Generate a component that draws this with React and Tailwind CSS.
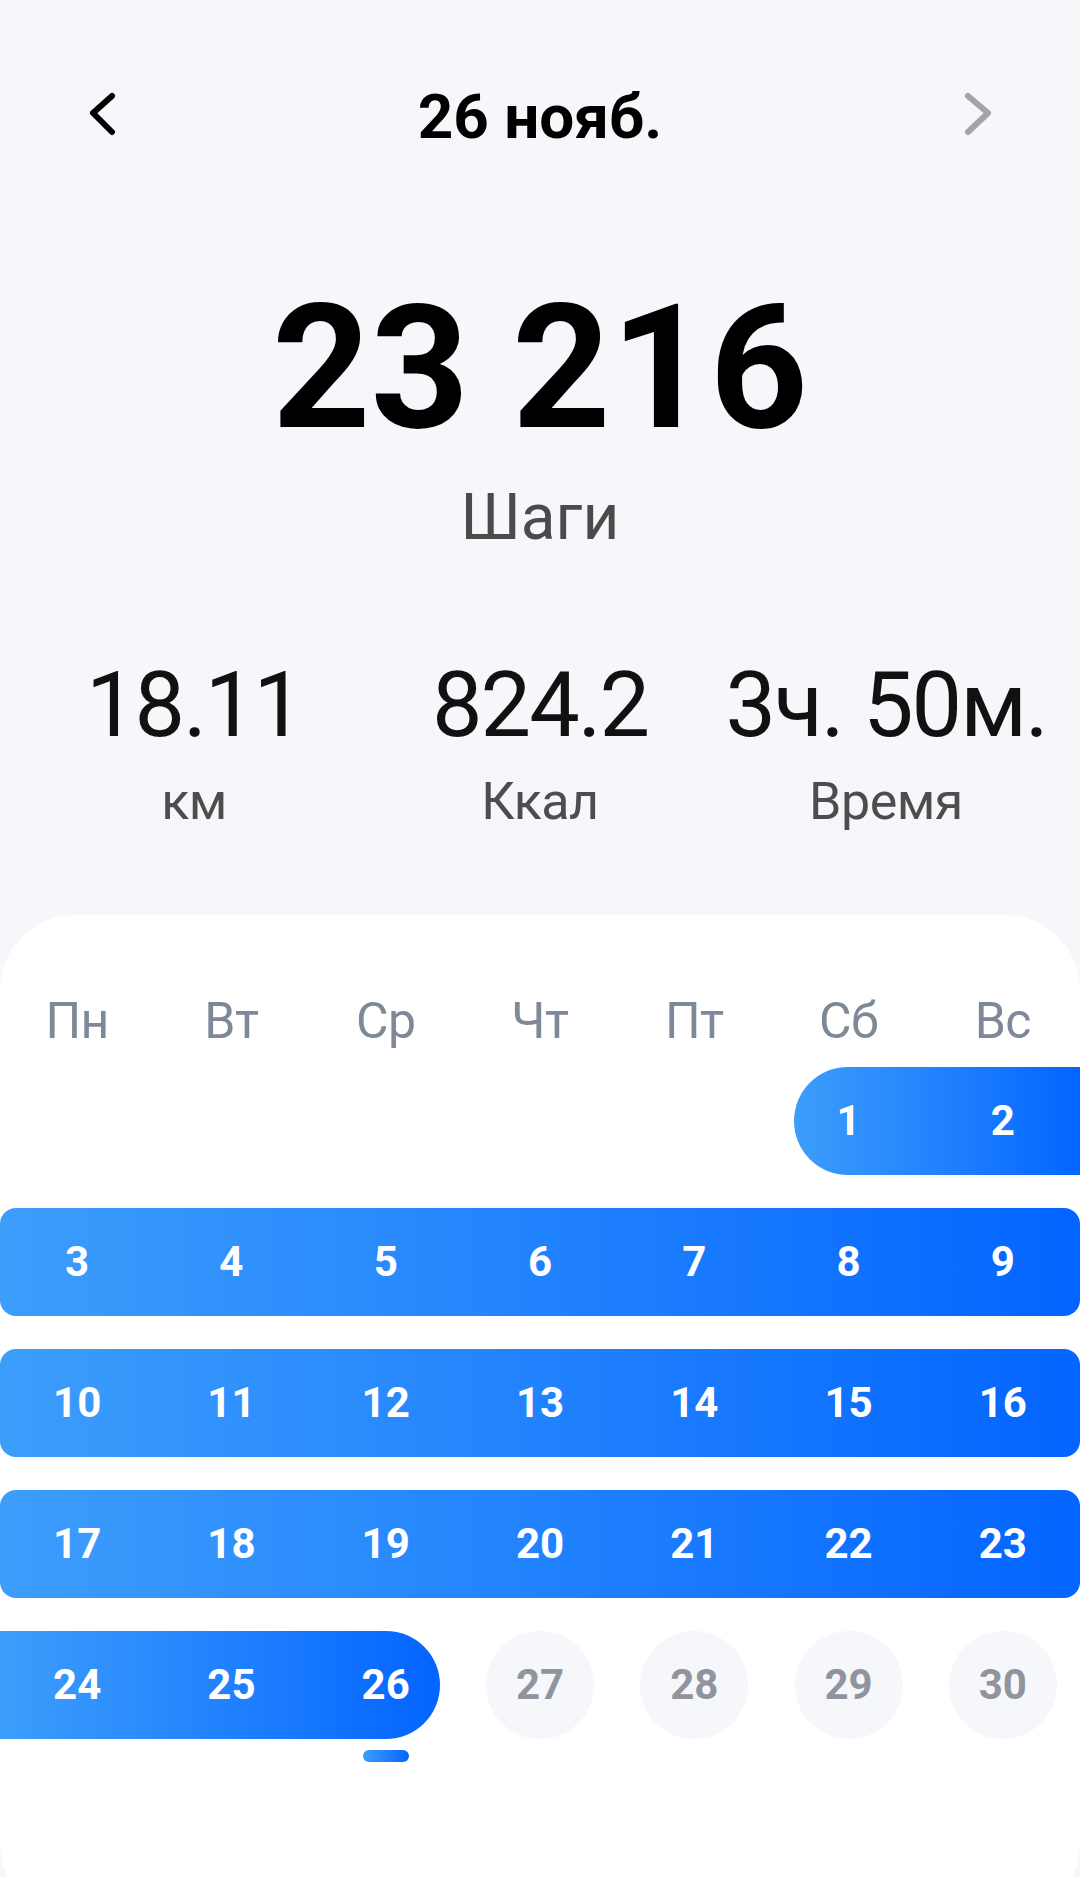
import React from 'react';

const grad = 'bg-gradient-to-r from-[#3d9dfb] to-[#0464ff]';

const weekDays = ['Пн', 'Вт', 'Ср', 'Чт', 'Пт', 'Сб', 'Вс'];

const Num = ({ children, className = '' }) => (
  <div className={`h-full flex items-center justify-center text-[42px] leading-none font-bold ${className}`}>
    {children}
  </div>
);

const FullRow = ({ days }) => (
  <div className={`h-[108px] rounded-[16px] ${grad} grid grid-cols-7 text-white`}>
    {days.map((d) => (
      <Num key={d}>{d}</Num>
    ))}
  </div>
);

const Stat = ({ value, label }) => (
  <div className="flex flex-col items-center">
    <div className="text-[90px] leading-none tracking-[-2px] text-[#111]">{value}</div>
    <div className="mt-[25px] text-[52px] leading-none tracking-[-0.5px] text-[#4d4d4d]">{label}</div>
  </div>
);

const App = () => {
  return (
    <div className="h-[1877px] overflow-hidden bg-[#f7f7fb] font-['Roboto','Noto_Sans',sans-serif] flex flex-col">
      {/* Header */}
      <div className="mt-[86px] h-[62px] px-[88px] flex items-center justify-between">
        <svg width="30" height="44" viewBox="0 0 30 44" className="mb-[6px]">
          <polyline points="24,4 5,21 24,40" fill="none" stroke="#000" strokeWidth="6" strokeLinecap="round" strokeLinejoin="round" />
        </svg>
        <div className="text-[62px] leading-none font-bold text-black">26 нояб.</div>
        <svg width="30" height="44" viewBox="0 0 30 44" className="mb-[6px]">
          <polyline points="6,4 26,21 6,40" fill="none" stroke="#a3a3a8" strokeWidth="6" strokeLinecap="round" strokeLinejoin="round" />
        </svg>
      </div>

      {/* Steps */}
      <div className="mt-[134px] flex flex-col items-center">
        <div className="text-[172px] leading-none font-bold text-black">23 216</div>
        <div className="mt-[32px] text-[64px] leading-none text-[#4b4b4b]">Шаги</div>
      </div>

      {/* Stats */}
      <div className="mt-[111px] px-[21px] grid grid-cols-3">
        <Stat value="18.11" label="км" />
        <Stat value="824.2" label="Ккал" />
        <Stat value="3ч. 50м." label="Время" />
      </div>

      {/* Calendar card */}
      <div className="mt-[87px] h-[1003px] shrink-0 bg-white rounded-[75px] pt-[81px]">
        <div className="grid grid-cols-7 text-center text-[50px] leading-none tracking-[-0.5px] text-[#7d8898]">
          {weekDays.map((d) => (
            <div key={d}>{d}</div>
          ))}
        </div>

        <div className="mt-[21px] flex flex-col gap-[33px]">
          {/* Week 1 */}
          <div className="h-[108px] grid grid-cols-7">
            <div className={`col-start-6 col-span-2 ml-[23px] rounded-l-full rounded-r-[16px] ${grad} flex text-white`}>
              <Num className="w-[131.3px] pr-[23px]">1</Num>
              <Num className="flex-1">2</Num>
            </div>
          </div>

          <FullRow days={[3, 4, 5, 6, 7, 8, 9]} />
          <FullRow days={[10, 11, 12, 13, 14, 15, 16]} />
          <FullRow days={[17, 18, 19, 20, 21, 22, 23]} />

          {/* Week 5 */}
          <div className="h-[108px] grid grid-cols-7">
            <div className={`col-span-3 mr-[23px] rounded-l-[16px] rounded-r-full ${grad} flex text-white`}>
              <Num className="flex-1">24</Num>
              <Num className="flex-1">25</Num>
              <Num className="w-[131.3px] pl-[23px]">26</Num>
            </div>
            {[27, 28, 29, 30].map((d) => (
              <div key={d} className="flex items-center justify-center">
                <div className="w-[108px] h-[108px] rounded-full bg-[#f6f7fa] flex items-center justify-center text-[42px] leading-none font-bold text-[#8f949e]">
                  {d}
                </div>
              </div>
            ))}
          </div>
        </div>

        <div className="mt-[11px] grid grid-cols-7">
          <div className="col-start-3 flex justify-center">
            <div className={`w-[46px] h-[12px] rounded-full ${grad}`} />
          </div>
        </div>
      </div>
    </div>
  );
};

export default App;
